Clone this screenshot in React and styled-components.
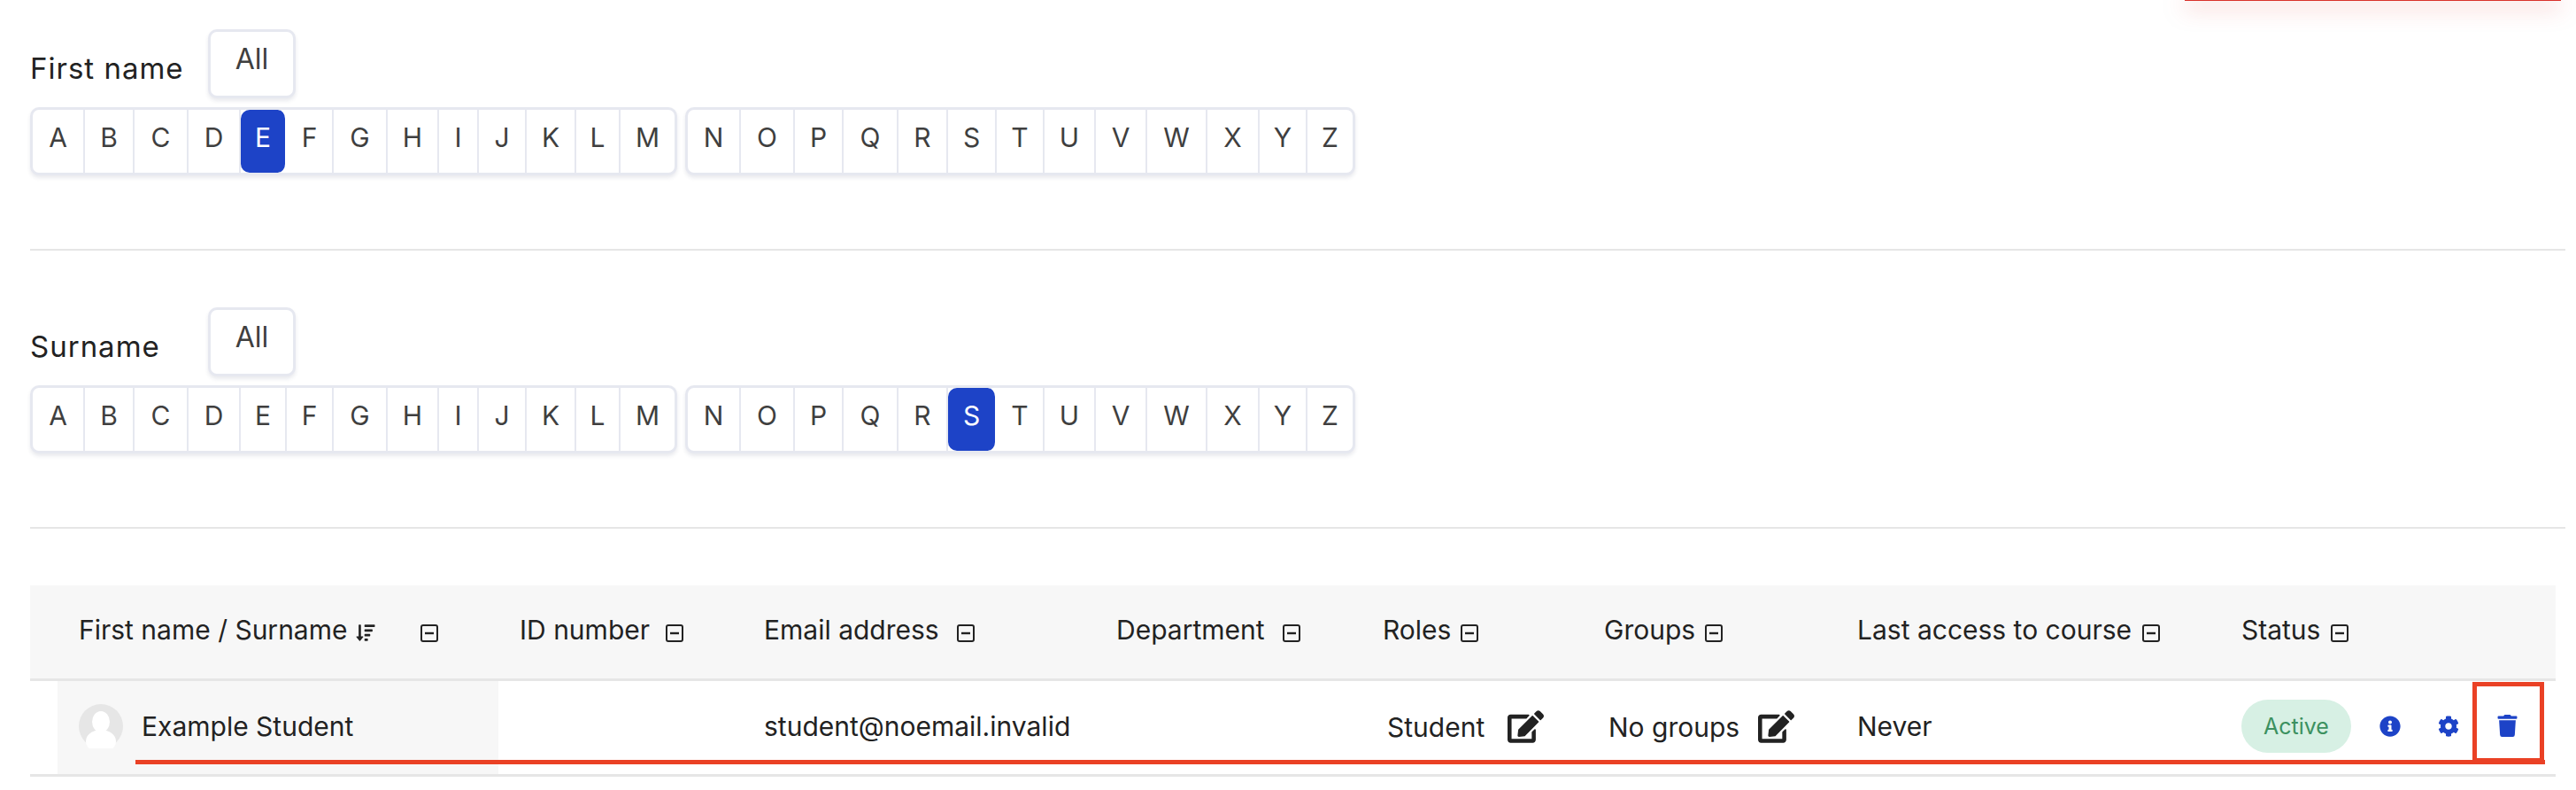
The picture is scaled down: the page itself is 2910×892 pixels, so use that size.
import React from 'react';
import styled, { createGlobalStyle } from 'styled-components';
import { FaCog, FaEdit, FaInfoCircle, FaSortAmountDown, FaTrash } from 'react-icons/fa';

const GlobalStyle = createGlobalStyle`
  html, body {
    margin: 0;
    background: #fff;
    font-family: "Inter", "Liberation Sans", sans-serif;
  }
`;

const Page = styled.div`
  position: relative;
  width: 2910px;
  height: 892px;
  overflow: hidden;
  box-sizing: border-box;
  padding: 33px 12px 0 34px;
`;

const Section = styled.section`
  height: 248px;
  margin-bottom: 64px;
  border-bottom: 2px solid #e6e6e6;
`;

const FilterRow = styled.div`
  display: flex;
  height: 77px;
`;

const FilterLabel = styled.span`
  width: 201px;
  padding-top: 24px;
  font-size: 33px;
  letter-spacing: 1px;
  line-height: 40px;
  color: #222;
`;

const AllButton = styled.a`
  box-sizing: border-box;
  width: 99px;
  height: 78px;
  padding-top: 11px;
  border: 3px solid #e6e8f0;
  border-radius: 10px;
  box-shadow: 0 3px 4px rgba(40, 50, 90, 0.1);
  background: #fff;
  text-align: center;
  font-size: 32px;
  line-height: 40px;
  color: #3f3f3f;
`;

const Alphabet = styled.div`
  display: flex;
  gap: 9px;
  margin-top: 11px;
`;

const LetterGroup = styled.div`
  display: flex;
  height: 77px;
  box-sizing: border-box;
  border: 3px solid #e6e8f0;
  border-radius: 10px;
  box-shadow: 0 3px 4px rgba(40, 50, 90, 0.1);
  background: #fff;
`;

const Letter = styled.a`
  box-sizing: border-box;
  display: block;
  width: ${(p) => p.$width}px;
  padding-top: 11px;
  text-align: center;
  font-size: 30px;
  line-height: 40px;
  color: ${(p) => (p.$active ? '#fff' : '#3f3f3f')};
  background: ${(p) => (p.$active ? '#1d43c7' : 'transparent')};
  border-radius: ${(p) => (p.$active ? '10px' : '0')};
  border-right: 2px solid ${(p) => (p.$active ? '#fff' : '#e6e8f0')};

  &:last-child {
    border-right: 0;
  }
`;

const Table = styled.table`
  table-layout: fixed;
  width: 2853px;
  border-collapse: collapse;
  font-size: 30px;
  color: #222;
`;

const HeaderRow = styled.tr`
  height: 106px;
  background: #f7f7f7;
  border-bottom: 3px solid #e6e6e6;
`;

const HeaderCell = styled.th`
  padding: 0 0 4px ${(p) => p.$pad || 24}px;
  text-align: left;
  font-weight: 400;
  white-space: nowrap;
`;

const BodyRow = styled.tr`
  height: 105px;
  border-bottom: 3px solid #e6e6e6;
`;

const Cell = styled.td`
  padding: 0 0 3px 24px;
  white-space: nowrap;
`;

const StickyCell = styled.td`
  padding: 0 0 0 31px;
`;

const StickyInner = styled.div`
  display: flex;
  align-items: center;
  gap: 21px;
  height: 105px;
  padding: 0 0 2px 24px;
  box-sizing: border-box;
  background: #f7f7f7;
`;

const Avatar = styled.svg`
  width: 50px;
  height: 50px;
  flex: none;
`;

const HeadIcons = styled.span`
  display: inline-flex;
  align-items: center;
  vertical-align: -3px;
  margin-left: ${(p) => p.$gap || 20}px;
  color: #222;
`;

const SortIcon = styled(FaSortAmountDown)`
  width: 24px;
  height: 21px;
  margin-left: 9px;
  vertical-align: -3px;
`;

const EditLine = styled.div`
  display: flex;
  align-items: center;
  gap: ${(p) => p.$gap}px;
  padding: 2px 0 0 5px;
`;

const EditIcon = styled(FaEdit)`
  width: 41px;
  height: 37px;
  color: #222;
`;

const StatusLine = styled.div`
  display: flex;
  align-items: center;
`;

const Badge = styled.span`
  display: block;
  box-sizing: border-box;
  width: 124px;
  height: 60px;
  border-radius: 30px;
  background: #d7f0e4;
  color: #3c9160;
  font-size: 25px;
  line-height: 60px;
  text-align: center;
`;

const ActionIcon = styled.span`
  display: flex;
  justify-content: center;
  width: 66px;
  font-size: ${(p) => p.$size || 24}px;
  color: #1d43c7;
  margin-left: ${(p) => p.$offset || 0}px;
`;

const TopStripe = styled.div`
  position: absolute;
  left: 2468px;
  top: -3px;
  width: 425px;
  height: 4px;
  background: #d8322c;
  box-shadow: 0 6px 24px rgba(216, 50, 44, 0.55);
`;

const Underline = styled.div`
  position: absolute;
  left: 153px;
  top: 858px;
  width: 2722px;
  height: 5px;
  background: #ea4125;
`;

const CalloutBox = styled.div`
  position: absolute;
  left: 2793px;
  top: 770px;
  width: 81px;
  height: 91px;
  box-sizing: border-box;
  border: 5px solid #ea4125;
`;

const CollapseIcon = () => (
  <svg width="20" height="20" viewBox="0 0 20 20">
    <rect x="1" y="1" width="18" height="18" rx="2" fill="none" stroke="#222" strokeWidth="2" />
    <path d="M5 10h10" stroke="#222" strokeWidth="2.4" />
  </svg>
);

const firstRow = [
  ['A', 59], ['B', 56], ['C', 61], ['D', 59], ['E', 52], ['F', 53], ['G', 61],
  ['H', 58], ['I', 45], ['J', 54], ['K', 56], ['L', 50], ['M', 61],
];
const secondRow = [
  ['N', 60], ['O', 61], ['P', 55], ['Q', 62], ['R', 56], ['S', 55], ['T', 54],
  ['U', 58], ['V', 58], ['W', 68], ['X', 59], ['Y', 54], ['Z', 51],
];

const Filter = ({ label, active }) => (
  <Section>
    <FilterRow>
      <FilterLabel>{label}</FilterLabel>
      <AllButton>All</AllButton>
    </FilterRow>
    <Alphabet>
      {[firstRow, secondRow].map((group, i) => (
        <LetterGroup key={i}>
          {group.map(([letter, width]) => (
            <Letter key={letter} $width={width} $active={letter === active}>{letter}</Letter>
          ))}
        </LetterGroup>
      ))}
    </Alphabet>
  </Section>
);

const columns = [529, 276, 398, 301, 250, 286, 434, 379];
const headers = [
  ['ID number', 18],
  ['Email address', 20],
  ['Department', 20],
  ['Roles', 11],
  ['Groups', 11],
  ['Last access to course', 12],
  ['Status', 12],
];

export default function App() {
  return (
    <Page>
      <GlobalStyle />
      <TopStripe />
      <Filter label="First name" active="E" />
      <Filter label="Surname" active="S" />
      <Table>
        <colgroup>
          {columns.map((w, i) => <col key={i} width={w} />)}
        </colgroup>
        <thead>
          <HeaderRow>
            <HeaderCell $pad={55}>
              First name / Surname
              <SortIcon />
              <HeadIcons $gap={50}><CollapseIcon /></HeadIcons>
            </HeaderCell>
            {headers.map(([title, gap]) => (
              <HeaderCell key={title}>
                {title}
                <HeadIcons $gap={gap}><CollapseIcon /></HeadIcons>
              </HeaderCell>
            ))}
          </HeaderRow>
        </thead>
        <tbody>
          <BodyRow>
            <StickyCell>
              <StickyInner>
                <Avatar viewBox="0 0 50 50">
                  <circle cx="25" cy="25" r="25" fill="#e6e6e6" />
                  <ellipse cx="25" cy="20" rx="10" ry="12" fill="#fff" />
                  <ellipse cx="25" cy="42" rx="17" ry="13" fill="#fff" />
                </Avatar>
                Example Student
              </StickyInner>
            </StickyCell>
            <Cell />
            <Cell>student@noemail.invalid</Cell>
            <Cell />
            <Cell>
              <EditLine $gap={26}>Student <EditIcon /></EditLine>
            </Cell>
            <Cell>
              <EditLine $gap={21}>No groups <EditIcon /></EditLine>
            </Cell>
            <Cell>Never</Cell>
            <Cell>
              <StatusLine>
                <Badge>Active</Badge>
                <ActionIcon $offset={11}><FaInfoCircle /></ActionIcon>
                <ActionIcon><FaCog /></ActionIcon>
                <ActionIcon $size={25}><FaTrash /></ActionIcon>
              </StatusLine>
            </Cell>
          </BodyRow>
        </tbody>
      </Table>
      <Underline />
      <CalloutBox />
    </Page>
  );
}
